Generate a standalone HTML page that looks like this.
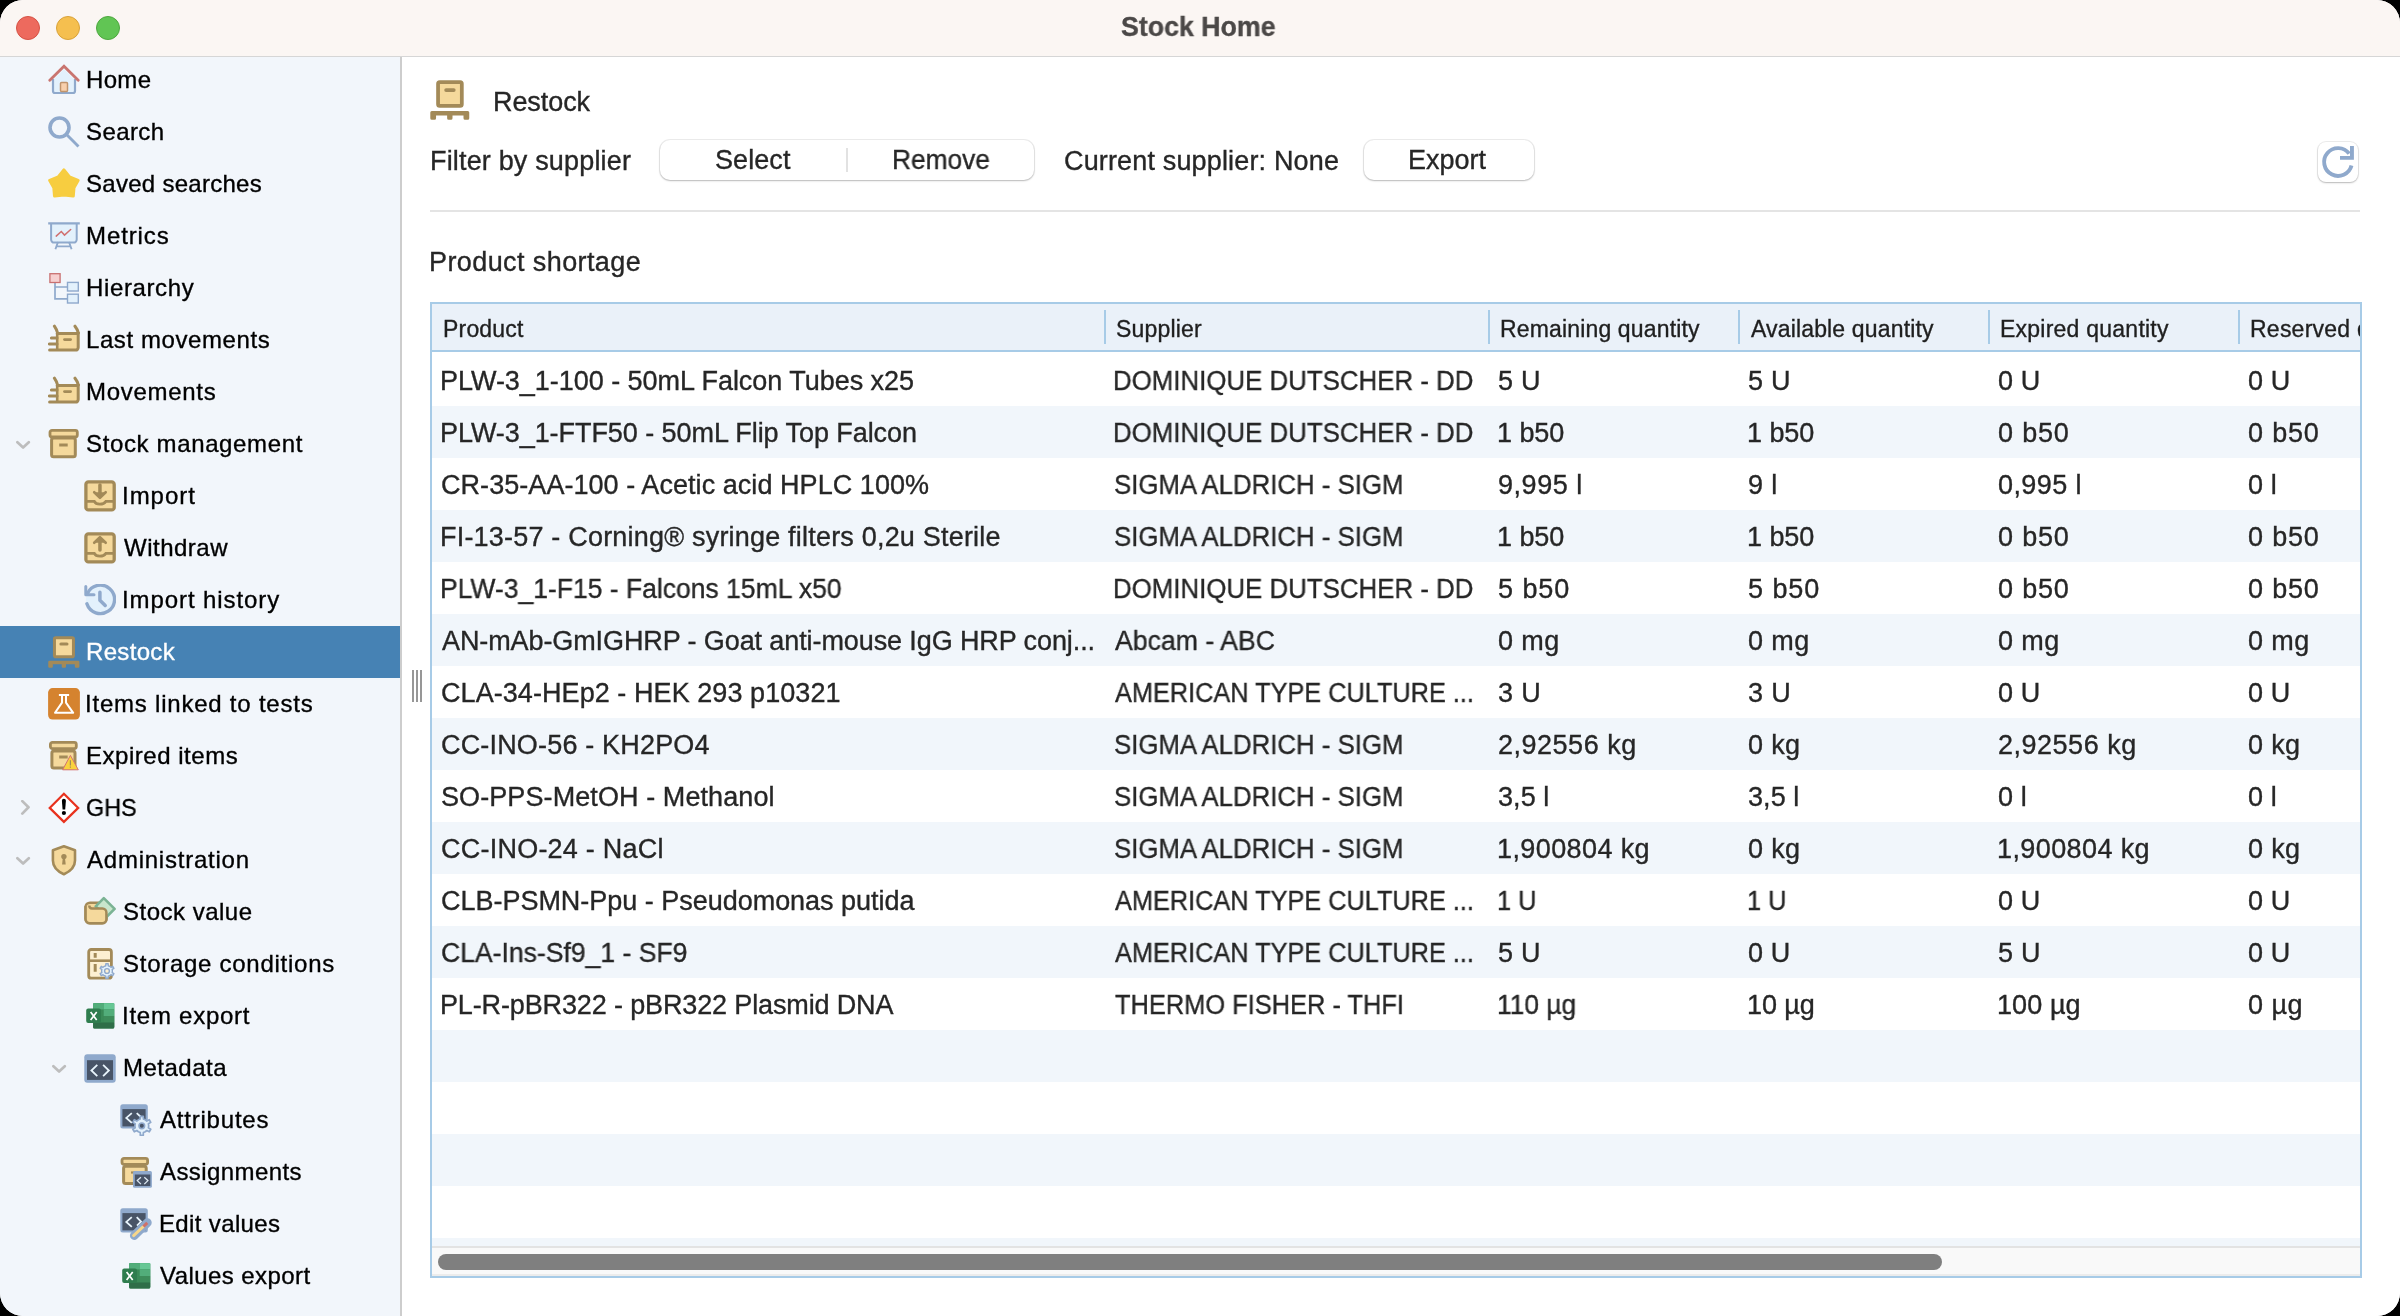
<!DOCTYPE html>
<html><head><meta charset="utf-8">
<style>
*{margin:0;padding:0;box-sizing:border-box}
html,body{width:2400px;height:1316px;overflow:hidden;background:#000}
body{font-family:"Liberation Sans",sans-serif;position:relative;-webkit-font-smoothing:antialiased}
#win{position:absolute;left:0;top:0;width:2400px;height:1316px;border-radius:23px;overflow:hidden;background:#fff}
#title{position:absolute;left:0;top:0;width:2400px;height:57px;background:#fbf6f3;border-bottom:1px solid #d6d6d6}
#title .t{position:absolute;left:0;width:2400px;top:11px;text-align:center;font-weight:bold;font-size:26px;color:#4b4847;line-height:30px}
.tl{position:absolute;top:16px;width:24px;height:24px;border-radius:50%}
#side{position:absolute;left:0;top:57px;width:402px;height:1259px;background:#f2f6fb;border-right:2px solid #cdcdcd}
.it{position:absolute;left:0;width:400px;height:52px}
.it .tx{position:absolute;top:0;line-height:52px;font-size:25px;color:#000;white-space:nowrap}
.it svg{position:absolute}
.sel{background:#4682b4}
.sel .tx{color:#fff}
.chev{position:absolute}
#main{position:absolute;left:402px;top:57px;width:1998px;height:1259px;background:#fff}
.abs{position:absolute;white-space:nowrap}
.tt{position:absolute;white-space:nowrap;line-height:40px;height:40px;will-change:transform}
.txt{color:#262626;font-size:26px;line-height:30px}
.btn{position:absolute;background:#fff;border-radius:10px;box-shadow:0 0 0 1px rgba(0,0,0,0.07),0 1px 2px rgba(0,0,0,0.22)}
#tbl{position:absolute;left:430px;top:302px;width:1932px;height:976px;border:2px solid #a7cbe7;overflow:hidden;background:#fff}
#thead{position:absolute;left:0;top:0;width:1928px;height:48px;background:#eaf1f9;border-bottom:2px solid #a7cbe7}
.hd{position:absolute;top:0;line-height:48px;font-size:23px;color:#1e1e1e;white-space:nowrap}
.sep{position:absolute;top:6px;width:2px;height:34px;background:#a7cbe7}
.row{position:absolute;left:0;width:1928px;height:52px}
.row.b{background:#f1f6fb}
.c{position:absolute;top:0;line-height:52px;font-size:26px;color:#262626;white-space:nowrap}
</style></head><body>
<div id="win">
 <div id="title">
  <div class="tl" style="left:16px;background:#ed6a5e;border:1px solid #d55245"></div>
  <div class="tl" style="left:56px;background:#f5bf4f;border:1px solid #d8a23a"></div>
  <div class="tl" style="left:96px;background:#61c554;border:1px solid #4ea73f"></div>
  <div class="tt" style="left:1121.25px;top:7px;font-size:27px;transform:scaleX(0.9905);transform-origin:0 0;color:#4b4847;-webkit-text-stroke:0.35px #4b4847;font-weight:bold">Stock Home</div>
 </div>
 <div id="side">
 <div class="it" style="top:-3px"><svg style="left:48px;top:10px" width="32" height="32" viewBox="0 0 32 32"><path d="M5.5 15.5 L16 5 L26.5 15.5 V28 H5.5Z" fill="#e3f1fc"/><path d="M5 15 V27 a2 2 0 0 0 2 2 H25 a2 2 0 0 0 2 -2 V15" fill="none" stroke="#8fa9cc" stroke-width="2.2"/><path d="M1.8 16.3 L16 2.3 L30.2 16.3" fill="none" stroke="#c97570" stroke-width="2.8" stroke-linecap="round" stroke-linejoin="miter"/><rect x="12.5" y="18.6" width="7" height="9" rx="1" fill="#f8d0ac" stroke="#c0946c" stroke-width="1.5"/></svg><div class="tt" style="left:86.30px;top:6px;font-size:24px;letter-spacing:0.343px;color:#000;-webkit-text-stroke:0.35px #000">Home</div></div>
<div class="it" style="top:49px"><svg style="left:48px;top:10px" width="32" height="32" viewBox="0 0 32 32"><circle cx="11.5" cy="11.5" r="9.5" fill="none" stroke="#8fa9cc" stroke-width="3.6"/><path d="M18.3 18.3 L30.5 30.5" stroke="#8fa9cc" stroke-width="2.9"/></svg><div class="tt" style="left:86.30px;top:6px;font-size:24px;letter-spacing:0.401px;color:#000;-webkit-text-stroke:0.35px #000">Search</div></div>
<div class="it" style="top:101px"><svg style="left:48px;top:10px" width="32" height="32" viewBox="0 0 32 32"><path d="M15.9 2 L21.5 8.9 L30 12.4 L25.9 19.6 L25.2 28 L15.9 26.8 L6.6 28 L5.9 19.6 L1.8 12.4 L10.3 8.9Z" fill="#f7cd40" stroke="#f7cd40" stroke-width="3.2" stroke-linejoin="round"/></svg><div class="tt" style="left:86.30px;top:6px;font-size:24px;letter-spacing:0.277px;color:#000;-webkit-text-stroke:0.35px #000">Saved searches</div></div>
<div class="it" style="top:153px"><svg style="left:48px;top:10px" width="32" height="32" viewBox="0 0 32 32"><path d="M3.1 3.2 V19.6 a3 3 0 0 0 3 3 H25.7 a3 3 0 0 0 3 -3 V3.2" fill="#e3f1fc" stroke="#8fa9cc" stroke-width="2"/><path d="M0.2 3.3 H31.8" stroke="#8fa9cc" stroke-width="2.3"/><path d="M8.2 16.1 L13.3 11.5 L16.5 15.1 L22.7 9.5" fill="none" stroke="#d07070" stroke-width="1.5" stroke-linecap="round"/><path d="M10 22 L7.4 29.2 M21 22 L23.6 29.2 M8.6 26.4 H22.4" stroke="#8fa9cc" stroke-width="1.9" fill="none"/></svg><div class="tt" style="left:86.30px;top:6px;font-size:24px;letter-spacing:0.895px;color:#000;-webkit-text-stroke:0.35px #000">Metrics</div></div>
<div class="it" style="top:205px"><svg style="left:48px;top:10px" width="32" height="32" viewBox="0 0 32 32"><path d="M7 10.5 V26.9 H19 M7 15 H19" fill="none" stroke="#8fa9cc" stroke-width="1.7"/><rect x="1.9" y="1.7" width="10.2" height="8.8" fill="#f6d0d0" stroke="#c97070" stroke-width="1.3"/><rect x="19.5" y="10.4" width="10.8" height="8.6" fill="#e3f1fc" stroke="#8fa9cc" stroke-width="1.4"/><rect x="19.5" y="22.2" width="10.8" height="8.8" fill="#e3f1fc" stroke="#8fa9cc" stroke-width="1.4"/></svg><div class="tt" style="left:86.30px;top:6px;font-size:24px;letter-spacing:0.626px;color:#000;-webkit-text-stroke:0.35px #000">Hierarchy</div></div>
<div class="it" style="top:257px"><svg style="left:48px;top:10px" width="32" height="32" viewBox="0 0 32 32"><rect x="9.2" y="9.4" width="20.9" height="16.6" fill="#f5d99c"/><path d="M9.2 9.4 H30.2 V23.6 a2.5 2.5 0 0 1 -2.5 2.5 H1.6" fill="none" stroke="#a38a58" stroke-width="3" stroke-linecap="round"/><path d="M9.2 9.4 V26" stroke="#a38a58" stroke-width="2.6"/><path d="M6.4 2.2 C8 4.5 9 6.5 9.6 9 M27 2.2 C28.6 4.2 29.8 6.3 30.4 9" fill="none" stroke="#a38a58" stroke-width="3" stroke-linecap="round"/><path d="M3.4 14 H9 M1.4 20 H9" stroke="#a38a58" stroke-width="3" stroke-linecap="round"/><path d="M16.5 15.6 H22.6" stroke="#a38a58" stroke-width="2.8" stroke-linecap="round"/></svg><div class="tt" style="left:86.30px;top:6px;font-size:24px;letter-spacing:0.587px;color:#000;-webkit-text-stroke:0.35px #000">Last movements</div></div>
<div class="it" style="top:309px"><svg style="left:48px;top:10px" width="32" height="32" viewBox="0 0 32 32"><rect x="9.2" y="9.4" width="20.9" height="16.6" fill="#f5d99c"/><path d="M9.2 9.4 H30.2 V23.6 a2.5 2.5 0 0 1 -2.5 2.5 H1.6" fill="none" stroke="#a38a58" stroke-width="3" stroke-linecap="round"/><path d="M9.2 9.4 V26" stroke="#a38a58" stroke-width="2.6"/><path d="M6.4 2.2 C8 4.5 9 6.5 9.6 9 M27 2.2 C28.6 4.2 29.8 6.3 30.4 9" fill="none" stroke="#a38a58" stroke-width="3" stroke-linecap="round"/><path d="M3.4 14 H9 M1.4 20 H9" stroke="#a38a58" stroke-width="3" stroke-linecap="round"/><path d="M16.5 15.6 H22.6" stroke="#a38a58" stroke-width="2.8" stroke-linecap="round"/></svg><div class="tt" style="left:86.30px;top:6px;font-size:24px;letter-spacing:0.707px;color:#000;-webkit-text-stroke:0.35px #000">Movements</div></div>
<div class="it" style="top:361px"><svg style="left:16px;top:19px" width="16" height="14" viewBox="0 0 16 14"><path d="M1.4 5.2 L7.1 10.5 L12.8 5.2" fill="none" stroke="#bdbdbd" stroke-width="2.7" stroke-linecap="round" stroke-linejoin="round"/></svg><svg style="left:48px;top:10px" width="32" height="32" viewBox="0 0 32 32"><rect x="3.6" y="10" width="23.7" height="18.8" rx="2" fill="#f5d99c" stroke="#a38a58" stroke-width="3"/><rect x="2" y="2.3" width="27.3" height="6.6" rx="2" fill="#f5d99c" stroke="#a38a58" stroke-width="2.8"/><path d="M11.2 17 H19.7" stroke="#a38a58" stroke-width="3"/></svg><div class="tt" style="left:86.30px;top:6px;font-size:24px;letter-spacing:0.639px;color:#000;-webkit-text-stroke:0.35px #000">Stock management</div></div>
<div class="it" style="top:413px"><svg style="left:84px;top:10px" width="32" height="32" viewBox="0 0 32 32"><rect x="1.9" y="1.9" width="28.3" height="28" rx="2.5" fill="#f5d99c" stroke="#a38a58" stroke-width="3.3"/><path d="M2 21.4 H10.3 C12 25 19.5 25 21.8 21.4 H30" fill="none" stroke="#a38a58" stroke-width="2.8"/><path d="M15.95 5 V14" stroke="#a38a58" stroke-width="3.5" stroke-linecap="round"/><path d="M10.2 12.2 L15.95 17.8 L21.7 12.2" fill="#a38a58" stroke="#a38a58" stroke-width="2.6" stroke-linejoin="round" stroke-linecap="round"/></svg><div class="tt" style="left:121.80px;top:6px;font-size:24px;letter-spacing:0.970px;color:#000;-webkit-text-stroke:0.35px #000">Import</div></div>
<div class="it" style="top:465px"><svg style="left:84px;top:10px" width="32" height="32" viewBox="0 0 32 32"><rect x="1.9" y="1.9" width="28.3" height="28" rx="2.5" fill="#f5d99c" stroke="#a38a58" stroke-width="3.3"/><path d="M2 21.4 H10.3 C12 25 19.5 25 21.8 21.4 H30" fill="none" stroke="#a38a58" stroke-width="2.8"/><path d="M15.95 18 V9" stroke="#a38a58" stroke-width="3.5" stroke-linecap="round"/><path d="M10.2 10.8 L15.95 5.2 L21.7 10.8" fill="#a38a58" stroke="#a38a58" stroke-width="2.6" stroke-linejoin="round" stroke-linecap="round"/></svg><div class="tt" style="left:123.80px;top:6px;font-size:24px;letter-spacing:0.502px;color:#000;-webkit-text-stroke:0.35px #000">Withdraw</div></div>
<div class="it" style="top:517px"><svg style="left:84px;top:10px" width="32" height="32" viewBox="0 0 32 32"><circle cx="16" cy="16" r="14.2" fill="#e3f1fc"/><path d="M2.9 19.8 A14.2 14.2 0 1 0 3.6 9.2" fill="none" stroke="#8fa9cc" stroke-width="3.4" stroke-linecap="round"/><path d="M1.8 2.5 V10.7 H10" fill="none" stroke="#8fa9cc" stroke-width="3" stroke-linecap="round" stroke-linejoin="round"/><path d="M15.9 8.2 V16.3 L21.2 21.5" fill="none" stroke="#8fa9cc" stroke-width="3.5" stroke-linecap="round" stroke-linejoin="round"/></svg><div class="tt" style="left:121.80px;top:6px;font-size:24px;letter-spacing:0.910px;color:#000;-webkit-text-stroke:0.35px #000">Import history</div></div>
<div class="it sel" style="top:569px"><svg style="left:48px;top:10px" width="32" height="32" viewBox="0 0 32 32"><rect x="6.45" y="1.75" width="19" height="19" rx="1.3" fill="#f5d99c" stroke="#a38a58" stroke-width="3"/><path d="M12.9 8 H19" stroke="#a38a58" stroke-width="3" stroke-linecap="round"/><path d="M0.24 26 a1.2 1.2 0 0 1 1.2 -1.2 H30.2 a1.2 1.2 0 0 1 1.2 1.2 V30.6 a1.2 1.2 0 0 1 -1.2 1.2 H28 a1.2 1.2 0 0 1 -1.2 -1.2 V28.3 H18 V30.6 a1.2 1.2 0 0 1 -1.2 1.2 H14.9 a1.2 1.2 0 0 1 -1.2 -1.2 V28.3 H4.84 V30.6 a1.2 1.2 0 0 1 -1.2 1.2 H1.44 a1.2 1.2 0 0 1 -1.2 -1.2Z" fill="#a38a58"/></svg><div class="tt" style="left:86.30px;top:6px;font-size:24px;letter-spacing:0.334px;color:#fff;-webkit-text-stroke:0.35px #fff">Restock</div></div>
<div class="it" style="top:621px"><svg style="left:48px;top:10px" width="32" height="32" viewBox="0 0 32 32"><rect x="0.1" y="0.1" width="31.8" height="31.5" rx="4.5" fill="#d5832f"/><path d="M10.9 7 H21.1 M14 7 V14.6 L7 24.8 H25.2 L18 14.6 V7" fill="none" stroke="#fff" stroke-width="2" stroke-linejoin="round"/></svg><div class="tt" style="left:85.30px;top:6px;font-size:24px;letter-spacing:0.781px;color:#000;-webkit-text-stroke:0.35px #000">Items linked to tests</div></div>
<div class="it" style="top:673px"><svg style="left:48px;top:10px" width="32" height="32" viewBox="0 0 32 32"><rect x="3.9" y="10.9" width="23.1" height="17.1" rx="2" fill="#f5d99c" stroke="#a38a58" stroke-width="3"/><rect x="2.4" y="2.4" width="25.9" height="6.2" rx="2" fill="#f5d99c" stroke="#a38a58" stroke-width="2.8"/><path d="M11.2 17 H19.7" stroke="#a38a58" stroke-width="3"/><path d="M22.4 15.4 L30.3 29.8 H14.6Z" fill="#f9d23e" stroke="#d27272" stroke-width="1" stroke-linejoin="round"/><path d="M22.4 20.3 V25.4 M22.4 26.6 V27.8" stroke="#a38a58" stroke-width="1.2"/></svg><div class="tt" style="left:86.30px;top:6px;font-size:24px;letter-spacing:0.526px;color:#000;-webkit-text-stroke:0.35px #000">Expired items</div></div>
<div class="it" style="top:725px"><svg style="left:20px;top:18px" width="12" height="16" viewBox="0 0 12 16"><path d="M2.3 1.1 L8.5 7.3 L2.3 13.6" fill="none" stroke="#bdbdbd" stroke-width="2.7" stroke-linecap="round" stroke-linejoin="round"/></svg><svg style="left:48px;top:10px" width="32" height="32" viewBox="0 0 32 32"><path d="M15.9 1.8 L30.2 15.9 L15.9 29.9 L1.7 15.9Z" fill="#fff" stroke="#e8321e" stroke-width="2.2" stroke-linejoin="miter"/><path d="M13.9 8.8 a2 2 0 0 1 4 0 L17.2 17.6 H14.6Z" fill="#000"/><circle cx="15.9" cy="21" r="2.1" fill="#000"/></svg><div class="tt" style="left:86.33px;top:6px;font-size:24px;transform:scaleX(0.9740);transform-origin:0 0;color:#000;-webkit-text-stroke:0.35px #000">GHS</div></div>
<div class="it" style="top:777px"><svg style="left:16px;top:19px" width="16" height="14" viewBox="0 0 16 14"><path d="M1.4 5.2 L7.1 10.5 L12.8 5.2" fill="none" stroke="#bdbdbd" stroke-width="2.7" stroke-linecap="round" stroke-linejoin="round"/></svg><svg style="left:48px;top:10px" width="32" height="32" viewBox="0 0 32 32"><path d="M15.9 2.3 L27 6.2 V16.5 C27 23 22 27.5 15.9 30.2 C9.8 27.5 4.9 23 4.9 16.5 V6.2Z" fill="#f5d99c" stroke="#a38a58" stroke-width="2.6" stroke-linejoin="round"/><circle cx="15.9" cy="12.6" r="2.7" fill="#a38a58"/><path d="M14.9 13 H16.9 L17.7 20.4 H14.1Z" fill="#a38a58"/></svg><div class="tt" style="left:87.30px;top:6px;font-size:24px;letter-spacing:0.768px;color:#000;-webkit-text-stroke:0.35px #000">Administration</div></div>
<div class="it" style="top:829px"><svg style="left:84px;top:10px" width="32" height="32" viewBox="0 0 32 32"><rect x="1.55" y="6.7" width="20.9" height="20.5" rx="4.5" fill="#f5d99c" stroke="#a38a58" stroke-width="2.6"/><path d="M19.8 2.2 L30.6 12.9 L22.5 21 L11.7 10.3Z" fill="#c8e6cc" stroke="#7bb394" stroke-width="2.6" stroke-linejoin="round"/><path d="M5.3 9.6 C5.3 11.6 6.3 12.5 8 12.5 H18.4 a4 4 0 0 1 4 4 V23.2 a4 4 0 0 1 -4 4 H5.6 a4 4 0 0 1 -4 -4 V10" fill="#f5d99c" stroke="#a38a58" stroke-width="2.5"/></svg><div class="tt" style="left:122.80px;top:6px;font-size:24px;letter-spacing:0.498px;color:#000;-webkit-text-stroke:0.35px #000">Stock value</div></div>
<div class="it" style="top:881px"><svg style="left:84px;top:10px" width="32" height="32" viewBox="0 0 32 32"><rect x="4.7" y="1.5" width="22.7" height="28.7" rx="2.5" fill="#fdf0d2" stroke="#a38a58" stroke-width="2.8"/><path d="M4.7 12.7 H27.4" stroke="#a38a58" stroke-width="2.6"/><path d="M11.2 5.1 V9.7 M11.2 16 V23.7" stroke="#a38a58" stroke-width="3"/><path d="M20.30 18.32 L21.77 17.74 L21.84 15.69 L24.16 15.69 L24.23 17.74 L25.70 18.32 L26.94 19.30 L28.75 18.34 L29.91 20.35 L28.17 21.44 L28.40 23.00 L28.17 24.56 L29.91 25.65 L28.75 27.66 L26.94 26.70 L25.70 27.68 L24.23 28.26 L24.16 30.31 L21.84 30.31 L21.77 28.26 L20.30 27.68 L19.06 26.70 L17.25 27.66 L16.09 25.65 L17.83 24.56 L17.60 23.00 L17.83 21.44 L16.09 20.35 L17.25 18.34 L19.06 19.30Z" fill="#e3f1fc" stroke="#8fa9cc" stroke-width="1.4" stroke-linejoin="round"/><circle cx="23" cy="23" r="2.4" fill="#fdf0d2" stroke="#8fa9cc" stroke-width="1.4"/></svg><div class="tt" style="left:122.80px;top:6px;font-size:24px;letter-spacing:0.730px;color:#000;-webkit-text-stroke:0.35px #000">Storage conditions</div></div>
<div class="it" style="top:933px"><svg style="left:84px;top:10px" width="32" height="32" viewBox="0 0 32 32"><rect x="9.1" y="3.1" width="21.2" height="25.4" rx="1.5" fill="#3a8a57"/><rect x="9.1" y="3.1" width="10.6" height="6.3" fill="#52ad7a"/><rect x="19.7" y="3.1" width="10.6" height="6.3" fill="#67c795"/><rect x="19.7" y="9.4" width="10.6" height="6.6" fill="#52ad7a"/><rect x="19.7" y="16" width="10.6" height="6.4" fill="#3d8c5a"/><path d="M9.1 22.4 H30.3 V27 a1.5 1.5 0 0 1 -1.5 1.5 H10.6 a1.5 1.5 0 0 1 -1.5 -1.5Z" fill="#2f6e48"/><rect x="2.2" y="8.5" width="14.8" height="14.5" rx="2" fill="#2f7d4e"/><path d="M6.6 12.1 L12.7 20 M12.7 12.1 L6.6 20" stroke="#fff" stroke-width="1.7"/></svg><div class="tt" style="left:121.80px;top:6px;font-size:24px;letter-spacing:0.742px;color:#000;-webkit-text-stroke:0.35px #000">Item export</div></div>
<div class="it" style="top:985px"><svg style="left:52px;top:19px" width="16" height="14" viewBox="0 0 16 14"><path d="M1.4 5.2 L7.1 10.5 L12.8 5.2" fill="none" stroke="#bdbdbd" stroke-width="2.7" stroke-linecap="round" stroke-linejoin="round"/></svg><svg style="left:84px;top:10px" width="32" height="32" viewBox="0 0 32 32"><rect x="0.3" y="2.2" width="31.4" height="28.5" rx="3" fill="#8fa9cc"/><rect x="3" y="8.2" width="26" height="19.7" fill="#485467"/><path d="M13.3 12.9 L7.4 18.5 L13.3 24.2 M19.1 12.9 L24.9 18.5 L19.1 24.2" fill="none" stroke="#e8f4fc" stroke-width="1.8"/></svg><div class="tt" style="left:122.80px;top:6px;font-size:24px;letter-spacing:0.497px;color:#000;-webkit-text-stroke:0.35px #000">Metadata</div></div>
<div class="it" style="top:1037px"><svg style="left:120px;top:10px" width="32" height="32" viewBox="0 0 32 32"><rect x="0.3" y="0.2" width="27.5" height="24.4" rx="2.5" fill="#8fa9cc"/><rect x="2.4" y="5.1" width="23.2" height="17.3" fill="#485467"/><path d="M11.8 9.1 L6.3 13.9 L11.8 18.8 M16.7 9.1 L22 14" fill="none" stroke="#e8f4fc" stroke-width="1.8"/><path d="M18.35 15.82 L20.22 15.08 L20.30 12.32 L23.30 12.32 L23.38 15.08 L25.25 15.82 L26.83 17.08 L29.26 15.76 L30.76 18.36 L28.41 19.81 L28.70 21.80 L28.41 23.79 L30.76 25.24 L29.26 27.84 L26.83 26.52 L25.25 27.78 L23.38 28.52 L23.30 31.28 L20.30 31.28 L20.22 28.52 L18.35 27.78 L16.77 26.52 L14.34 27.84 L12.84 25.24 L15.19 23.79 L14.90 21.80 L15.19 19.81 L12.84 18.36 L14.34 15.76 L16.77 17.08Z" fill="#e3f1fc" stroke="#8fa9cc" stroke-width="1.7" stroke-linejoin="round"/><circle cx="21.8" cy="21.8" r="2.8" fill="#485467" stroke="#8fa9cc" stroke-width="1.6"/></svg><div class="tt" style="left:159.50px;top:6px;font-size:24px;letter-spacing:0.791px;color:#000;-webkit-text-stroke:0.35px #000">Attributes</div></div>
<div class="it" style="top:1089px"><svg style="left:120px;top:10px" width="32" height="32" viewBox="0 0 32 32"><rect x="3.6" y="10.3" width="22.6" height="17.3" rx="2" fill="#f5d99c" stroke="#a38a58" stroke-width="3"/><rect x="2" y="2.4" width="25.6" height="5.9" rx="2" fill="#f5d99c" stroke="#a38a58" stroke-width="2.8"/><path d="M11 16.5 H17" stroke="#a38a58" stroke-width="2.2"/><rect x="13" y="15.1" width="18.9" height="16.6" rx="1.5" fill="#8fa9cc"/><rect x="14.8" y="18.5" width="15.5" height="11.5" fill="#485467"/><path d="M20.9 21.2 L17.3 24.6 L20.9 28.1 M24.3 21.2 L27.9 24.6 L24.3 28.1" fill="none" stroke="#e0ecf6" stroke-width="1.3"/></svg><div class="tt" style="left:159.50px;top:6px;font-size:24px;letter-spacing:0.411px;color:#000;-webkit-text-stroke:0.35px #000">Assignments</div></div>
<div class="it" style="top:1141px"><svg style="left:120px;top:10px" width="32" height="32" viewBox="0 0 32 32"><rect x="0.3" y="0.2" width="27.5" height="24.4" rx="2.5" fill="#8fa9cc"/><rect x="2.4" y="5.1" width="23.2" height="17.3" fill="#485467"/><path d="M11.8 9.1 L6.3 13.9 L11.8 18.8 M16.7 9.1 L21 13.6 L17 17.6" fill="none" stroke="#e8f4fc" stroke-width="1.8"/><path d="M14.2 27.6 L27.4 14.6" stroke="#8fa9cc" stroke-width="8.6" stroke-linecap="round"/><path d="M13.6 27.6 L23.4 18.5" stroke="#f7d68a" stroke-width="3" stroke-linecap="round"/><path d="M23.4 18.5 L27.3 14.8" stroke="#d07068" stroke-width="3"/></svg><div class="tt" style="left:158.50px;top:6px;font-size:24px;letter-spacing:0.360px;color:#000;-webkit-text-stroke:0.35px #000">Edit values</div></div>
<div class="it" style="top:1193px"><svg style="left:120px;top:10px" width="32" height="32" viewBox="0 0 32 32"><rect x="9.1" y="3.1" width="21.2" height="25.4" rx="1.5" fill="#3a8a57"/><rect x="9.1" y="3.1" width="10.6" height="6.3" fill="#52ad7a"/><rect x="19.7" y="3.1" width="10.6" height="6.3" fill="#67c795"/><rect x="19.7" y="9.4" width="10.6" height="6.6" fill="#52ad7a"/><rect x="19.7" y="16" width="10.6" height="6.4" fill="#3d8c5a"/><path d="M9.1 22.4 H30.3 V27 a1.5 1.5 0 0 1 -1.5 1.5 H10.6 a1.5 1.5 0 0 1 -1.5 -1.5Z" fill="#2f6e48"/><rect x="2.2" y="8.5" width="14.8" height="14.5" rx="2" fill="#2f7d4e"/><path d="M6.6 12.1 L12.7 20 M12.7 12.1 L6.6 20" stroke="#fff" stroke-width="1.7"/></svg><div class="tt" style="left:159.50px;top:6px;font-size:24px;letter-spacing:0.433px;color:#000;-webkit-text-stroke:0.35px #000">Values export</div></div>
 </div>
 <div id="main"></div>
 <svg style="position:absolute;left:430px;top:80px" width="40" height="40" viewBox="0 0 32 32"><rect x="6.45" y="1.75" width="19" height="19" rx="1.3" fill="#f5d99c" stroke="#a38a58" stroke-width="3"/><path d="M12.9 8 H19" stroke="#a38a58" stroke-width="3" stroke-linecap="round"/><path d="M0.24 26 a1.2 1.2 0 0 1 1.2 -1.2 H30.2 a1.2 1.2 0 0 1 1.2 1.2 V30.6 a1.2 1.2 0 0 1 -1.2 1.2 H28 a1.2 1.2 0 0 1 -1.2 -1.2 V28.3 H18 V30.6 a1.2 1.2 0 0 1 -1.2 1.2 H14.9 a1.2 1.2 0 0 1 -1.2 -1.2 V28.3 H4.84 V30.6 a1.2 1.2 0 0 1 -1.2 1.2 H1.44 a1.2 1.2 0 0 1 -1.2 -1.2Z" fill="#a38a58"/></svg>
<div class="tt" style="left:492.90px;top:82px;font-size:27px;letter-spacing:-0.072px;color:#262626;-webkit-text-stroke:0.35px #262626">Restock</div>
<div class="tt" style="left:430.10px;top:141px;font-size:27px;letter-spacing:0.166px;color:#262626;-webkit-text-stroke:0.35px #262626">Filter by supplier</div>
<div class="btn" style="left:660px;top:140px;width:374px;height:40px"></div>
<div class="abs" style="left:846px;top:148px;width:2px;height:24px;background:#e2e2e2"></div>
<div class="tt" style="left:714.80px;top:140px;font-size:27px;letter-spacing:0.072px;color:#262626;-webkit-text-stroke:0.35px #262626">Select</div>
<div class="tt" style="left:892.05px;top:140px;font-size:27px;transform:scaleX(0.9741);transform-origin:0 0;color:#262626;-webkit-text-stroke:0.35px #262626">Remove</div>
<div class="tt" style="left:1064.00px;top:141px;font-size:27px;letter-spacing:0.156px;color:#262626;-webkit-text-stroke:0.35px #262626">Current supplier: None</div>
<div class="btn" style="left:1364px;top:140px;width:170px;height:40px"></div>
<div class="tt" style="left:1408.40px;top:140px;font-size:27px;letter-spacing:0.014px;color:#262626;-webkit-text-stroke:0.35px #262626">Export</div>
<div class="btn" style="left:2318px;top:142px;width:40px;height:40px;border-radius:8px"></div>
<svg style="position:absolute;left:2318px;top:142px" width="40" height="40" viewBox="0 0 40 40"><path d="M33.5 23.5 A13.9 13.9 0 1 1 31.2 11.7" fill="none" stroke="#8fa9cc" stroke-width="3.9"/><path d="M22 14 H32 V4 H35.9 V17.7 H22Z" fill="#8fa9cc"/></svg>
<div class="abs" style="left:430px;top:210px;width:1930px;height:2px;background:#e4e4e4"></div>
<div class="tt" style="left:428.90px;top:242px;font-size:27px;letter-spacing:0.406px;color:#262626;-webkit-text-stroke:0.35px #262626">Product shortage</div>
<div class="abs" style="left:412px;top:670px;width:2px;height:32px;background:#979797"></div>
<div class="abs" style="left:416px;top:670px;width:2px;height:32px;background:#979797"></div>
<div class="abs" style="left:420px;top:670px;width:2px;height:32px;background:#979797"></div>
<div id="tbl"><div id="thead">
<div class="tt" style="left:10.90px;top:5px;font-size:23px;letter-spacing:0.188px;color:#1f1f1f;-webkit-text-stroke:0.35px #1f1f1f">Product</div>
<div class="tt" style="left:684.00px;top:5px;font-size:23px;letter-spacing:0.182px;color:#1f1f1f;-webkit-text-stroke:0.35px #1f1f1f">Supplier</div>
<div class="tt" style="left:1068.00px;top:5px;font-size:23px;letter-spacing:0.153px;color:#1f1f1f;-webkit-text-stroke:0.35px #1f1f1f">Remaining quantity</div>
<div class="tt" style="left:1319.00px;top:5px;font-size:23px;letter-spacing:0.155px;color:#1f1f1f;-webkit-text-stroke:0.35px #1f1f1f">Available quantity</div>
<div class="tt" style="left:1568.00px;top:5px;font-size:23px;letter-spacing:0.238px;color:#1f1f1f;-webkit-text-stroke:0.35px #1f1f1f">Expired quantity</div>
<div class="tt" style="left:1818.00px;top:5px;font-size:23px;letter-spacing:0.239px;color:#1f1f1f;-webkit-text-stroke:0.35px #1f1f1f">Reserved quantity</div>
<div class="sep" style="left:672px"></div>
<div class="sep" style="left:1056px"></div>
<div class="sep" style="left:1306px"></div>
<div class="sep" style="left:1556px"></div>
<div class="sep" style="left:1806px"></div>
</div>
<div class="row" style="top:50px"><div class="tt" style="left:7.50px;top:7px;font-size:27px;letter-spacing:-0.036px;color:#262626;-webkit-text-stroke:0.35px #262626">PLW-3_1-100 - 50mL Falcon Tubes x25</div><div class="tt" style="left:681.09px;top:7px;font-size:27px;transform:scaleX(0.9572);transform-origin:0 0;color:#262626;-webkit-text-stroke:0.35px #262626">DOMINIQUE DUTSCHER - DD</div><div class="tt" style="left:1065.70px;top:7px;font-size:27px;letter-spacing:0.241px;color:#262626;-webkit-text-stroke:0.35px #262626">5 U</div><div class="tt" style="left:1315.70px;top:7px;font-size:27px;letter-spacing:0.241px;color:#262626;-webkit-text-stroke:0.35px #262626">5 U</div><div class="tt" style="left:1565.90px;top:7px;font-size:27px;letter-spacing:0.091px;color:#262626;-webkit-text-stroke:0.35px #262626">0 U</div><div class="tt" style="left:1816.00px;top:7px;font-size:27px;letter-spacing:0.091px;color:#262626;-webkit-text-stroke:0.35px #262626">0 U</div></div>
<div class="row b" style="top:102px"><div class="tt" style="left:7.50px;top:7px;font-size:27px;letter-spacing:-0.062px;color:#262626;-webkit-text-stroke:0.35px #262626">PLW-3_1-FTF50 - 50mL Flip Top Falcon</div><div class="tt" style="left:681.09px;top:7px;font-size:27px;transform:scaleX(0.9572);transform-origin:0 0;color:#262626;-webkit-text-stroke:0.35px #262626">DOMINIQUE DUTSCHER - DD</div><div class="tt" style="left:1064.70px;top:7px;font-size:27px;letter-spacing:-0.062px;color:#262626;-webkit-text-stroke:0.35px #262626">1 b50</div><div class="tt" style="left:1314.70px;top:7px;font-size:27px;letter-spacing:-0.062px;color:#262626;-webkit-text-stroke:0.35px #262626">1 b50</div><div class="tt" style="left:1565.90px;top:7px;font-size:27px;letter-spacing:0.813px;color:#262626;-webkit-text-stroke:0.35px #262626">0 b50</div><div class="tt" style="left:1816.00px;top:7px;font-size:27px;letter-spacing:0.813px;color:#262626;-webkit-text-stroke:0.35px #262626">0 b50</div></div>
<div class="row" style="top:154px"><div class="tt" style="left:8.50px;top:7px;font-size:27px;letter-spacing:0.052px;color:#262626;-webkit-text-stroke:0.35px #262626">CR-35-AA-100 - Acetic acid HPLC 100%</div><div class="tt" style="left:682.04px;top:7px;font-size:27px;transform:scaleX(0.9554);transform-origin:0 0;color:#262626;-webkit-text-stroke:0.35px #262626">SIGMA ALDRICH - SIGM</div><div class="tt" style="left:1065.70px;top:7px;font-size:27px;letter-spacing:0.539px;color:#262626;-webkit-text-stroke:0.35px #262626">9,995 l</div><div class="tt" style="left:1315.70px;top:7px;font-size:27px;letter-spacing:0.391px;color:#262626;-webkit-text-stroke:0.35px #262626">9 l</div><div class="tt" style="left:1565.90px;top:7px;font-size:27px;letter-spacing:0.422px;color:#262626;-webkit-text-stroke:0.35px #262626">0,995 l</div><div class="tt" style="left:1816.00px;top:7px;font-size:27px;letter-spacing:0.091px;color:#262626;-webkit-text-stroke:0.35px #262626">0 l</div></div>
<div class="row b" style="top:206px"><div class="tt" style="left:7.50px;top:7px;font-size:27px;letter-spacing:0.200px;color:#262626;-webkit-text-stroke:0.35px #262626">FI-13-57 - Corning® syringe filters 0,2u Sterile</div><div class="tt" style="left:682.04px;top:7px;font-size:27px;transform:scaleX(0.9554);transform-origin:0 0;color:#262626;-webkit-text-stroke:0.35px #262626">SIGMA ALDRICH - SIGM</div><div class="tt" style="left:1064.70px;top:7px;font-size:27px;letter-spacing:-0.062px;color:#262626;-webkit-text-stroke:0.35px #262626">1 b50</div><div class="tt" style="left:1314.70px;top:7px;font-size:27px;letter-spacing:-0.062px;color:#262626;-webkit-text-stroke:0.35px #262626">1 b50</div><div class="tt" style="left:1565.90px;top:7px;font-size:27px;letter-spacing:0.813px;color:#262626;-webkit-text-stroke:0.35px #262626">0 b50</div><div class="tt" style="left:1816.00px;top:7px;font-size:27px;letter-spacing:0.813px;color:#262626;-webkit-text-stroke:0.35px #262626">0 b50</div></div>
<div class="row" style="top:258px"><div class="tt" style="left:7.54px;top:7px;font-size:27px;transform:scaleX(0.9812);transform-origin:0 0;color:#262626;-webkit-text-stroke:0.35px #262626">PLW-3_1-F15 - Falcons 15mL x50</div><div class="tt" style="left:681.09px;top:7px;font-size:27px;transform:scaleX(0.9572);transform-origin:0 0;color:#262626;-webkit-text-stroke:0.35px #262626">DOMINIQUE DUTSCHER - DD</div><div class="tt" style="left:1065.70px;top:7px;font-size:27px;letter-spacing:0.938px;color:#262626;-webkit-text-stroke:0.35px #262626">5 b50</div><div class="tt" style="left:1315.70px;top:7px;font-size:27px;letter-spacing:0.938px;color:#262626;-webkit-text-stroke:0.35px #262626">5 b50</div><div class="tt" style="left:1565.90px;top:7px;font-size:27px;letter-spacing:0.813px;color:#262626;-webkit-text-stroke:0.35px #262626">0 b50</div><div class="tt" style="left:1816.00px;top:7px;font-size:27px;letter-spacing:0.813px;color:#262626;-webkit-text-stroke:0.35px #262626">0 b50</div></div>
<div class="row b" style="top:310px"><div class="tt" style="left:9.50px;top:7px;font-size:27px;letter-spacing:-0.099px;color:#262626;-webkit-text-stroke:0.35px #262626">AN-mAb-GmIGHRP - Goat anti-mouse IgG HRP conj...</div><div class="tt" style="left:683.00px;top:7px;font-size:27px;transform:scaleX(0.9875);transform-origin:0 0;color:#262626;-webkit-text-stroke:0.35px #262626">Abcam - ABC</div><div class="tt" style="left:1065.70px;top:7px;font-size:27px;letter-spacing:0.397px;color:#262626;-webkit-text-stroke:0.35px #262626">0 mg</div><div class="tt" style="left:1315.70px;top:7px;font-size:27px;letter-spacing:0.397px;color:#262626;-webkit-text-stroke:0.35px #262626">0 mg</div><div class="tt" style="left:1565.90px;top:7px;font-size:27px;letter-spacing:0.397px;color:#262626;-webkit-text-stroke:0.35px #262626">0 mg</div><div class="tt" style="left:1816.00px;top:7px;font-size:27px;letter-spacing:0.397px;color:#262626;-webkit-text-stroke:0.35px #262626">0 mg</div></div>
<div class="row" style="top:362px"><div class="tt" style="left:8.50px;top:7px;font-size:27px;letter-spacing:0.066px;color:#262626;-webkit-text-stroke:0.35px #262626">CLA-34-HEp2 - HEK 293 p10321</div><div class="tt" style="left:683.00px;top:7px;font-size:27px;transform:scaleX(0.9371);transform-origin:0 0;color:#262626;-webkit-text-stroke:0.35px #262626">AMERICAN TYPE CULTURE ...</div><div class="tt" style="left:1065.70px;top:7px;font-size:27px;letter-spacing:0.391px;color:#262626;-webkit-text-stroke:0.35px #262626">3 U</div><div class="tt" style="left:1315.70px;top:7px;font-size:27px;letter-spacing:0.391px;color:#262626;-webkit-text-stroke:0.35px #262626">3 U</div><div class="tt" style="left:1565.90px;top:7px;font-size:27px;letter-spacing:0.091px;color:#262626;-webkit-text-stroke:0.35px #262626">0 U</div><div class="tt" style="left:1816.00px;top:7px;font-size:27px;letter-spacing:0.091px;color:#262626;-webkit-text-stroke:0.35px #262626">0 U</div></div>
<div class="row b" style="top:414px"><div class="tt" style="left:8.50px;top:7px;font-size:27px;letter-spacing:0.174px;color:#262626;-webkit-text-stroke:0.35px #262626">CC-INO-56 - KH2PO4</div><div class="tt" style="left:682.04px;top:7px;font-size:27px;transform:scaleX(0.9554);transform-origin:0 0;color:#262626;-webkit-text-stroke:0.35px #262626">SIGMA ALDRICH - SIGM</div><div class="tt" style="left:1065.70px;top:7px;font-size:27px;letter-spacing:0.511px;color:#262626;-webkit-text-stroke:0.35px #262626">2,92556 kg</div><div class="tt" style="left:1315.70px;top:7px;font-size:27px;letter-spacing:0.327px;color:#262626;-webkit-text-stroke:0.35px #262626">0 kg</div><div class="tt" style="left:1565.90px;top:7px;font-size:27px;letter-spacing:0.511px;color:#262626;-webkit-text-stroke:0.35px #262626">2,92556 kg</div><div class="tt" style="left:1816.00px;top:7px;font-size:27px;letter-spacing:0.327px;color:#262626;-webkit-text-stroke:0.35px #262626">0 kg</div></div>
<div class="row" style="top:466px"><div class="tt" style="left:8.50px;top:7px;font-size:27px;letter-spacing:0.087px;color:#262626;-webkit-text-stroke:0.35px #262626">SO-PPS-MetOH - Methanol</div><div class="tt" style="left:682.04px;top:7px;font-size:27px;transform:scaleX(0.9554);transform-origin:0 0;color:#262626;-webkit-text-stroke:0.35px #262626">SIGMA ALDRICH - SIGM</div><div class="tt" style="left:1065.70px;top:7px;font-size:27px;letter-spacing:0.066px;color:#262626;-webkit-text-stroke:0.35px #262626">3,5 l</div><div class="tt" style="left:1315.70px;top:7px;font-size:27px;letter-spacing:0.066px;color:#262626;-webkit-text-stroke:0.35px #262626">3,5 l</div><div class="tt" style="left:1565.90px;top:7px;font-size:27px;letter-spacing:0.091px;color:#262626;-webkit-text-stroke:0.35px #262626">0 l</div><div class="tt" style="left:1816.00px;top:7px;font-size:27px;letter-spacing:0.091px;color:#262626;-webkit-text-stroke:0.35px #262626">0 l</div></div>
<div class="row b" style="top:518px"><div class="tt" style="left:8.50px;top:7px;font-size:27px;letter-spacing:0.232px;color:#262626;-webkit-text-stroke:0.35px #262626">CC-INO-24 - NaCl</div><div class="tt" style="left:682.04px;top:7px;font-size:27px;transform:scaleX(0.9554);transform-origin:0 0;color:#262626;-webkit-text-stroke:0.35px #262626">SIGMA ALDRICH - SIGM</div><div class="tt" style="left:1064.70px;top:7px;font-size:27px;letter-spacing:0.398px;color:#262626;-webkit-text-stroke:0.35px #262626">1,900804 kg</div><div class="tt" style="left:1315.70px;top:7px;font-size:27px;letter-spacing:0.327px;color:#262626;-webkit-text-stroke:0.35px #262626">0 kg</div><div class="tt" style="left:1564.90px;top:7px;font-size:27px;letter-spacing:0.398px;color:#262626;-webkit-text-stroke:0.35px #262626">1,900804 kg</div><div class="tt" style="left:1816.00px;top:7px;font-size:27px;letter-spacing:0.327px;color:#262626;-webkit-text-stroke:0.35px #262626">0 kg</div></div>
<div class="row" style="top:570px"><div class="tt" style="left:8.50px;top:7px;font-size:27px;letter-spacing:-0.022px;color:#262626;-webkit-text-stroke:0.35px #262626">CLB-PSMN-Ppu - Pseudomonas putida</div><div class="tt" style="left:683.00px;top:7px;font-size:27px;transform:scaleX(0.9371);transform-origin:0 0;color:#262626;-webkit-text-stroke:0.35px #262626">AMERICAN TYPE CULTURE ...</div><div class="tt" style="left:1064.82px;top:7px;font-size:27px;transform:scaleX(0.9398);transform-origin:0 0;color:#262626;-webkit-text-stroke:0.35px #262626">1 U</div><div class="tt" style="left:1314.82px;top:7px;font-size:27px;transform:scaleX(0.9398);transform-origin:0 0;color:#262626;-webkit-text-stroke:0.35px #262626">1 U</div><div class="tt" style="left:1565.90px;top:7px;font-size:27px;letter-spacing:0.091px;color:#262626;-webkit-text-stroke:0.35px #262626">0 U</div><div class="tt" style="left:1816.00px;top:7px;font-size:27px;letter-spacing:0.091px;color:#262626;-webkit-text-stroke:0.35px #262626">0 U</div></div>
<div class="row b" style="top:622px"><div class="tt" style="left:8.52px;top:7px;font-size:27px;transform:scaleX(0.9836);transform-origin:0 0;color:#262626;-webkit-text-stroke:0.35px #262626">CLA-Ins-Sf9_1 - SF9</div><div class="tt" style="left:683.00px;top:7px;font-size:27px;transform:scaleX(0.9371);transform-origin:0 0;color:#262626;-webkit-text-stroke:0.35px #262626">AMERICAN TYPE CULTURE ...</div><div class="tt" style="left:1065.70px;top:7px;font-size:27px;letter-spacing:0.241px;color:#262626;-webkit-text-stroke:0.35px #262626">5 U</div><div class="tt" style="left:1315.70px;top:7px;font-size:27px;letter-spacing:0.091px;color:#262626;-webkit-text-stroke:0.35px #262626">0 U</div><div class="tt" style="left:1565.90px;top:7px;font-size:27px;letter-spacing:0.241px;color:#262626;-webkit-text-stroke:0.35px #262626">5 U</div><div class="tt" style="left:1816.00px;top:7px;font-size:27px;letter-spacing:0.091px;color:#262626;-webkit-text-stroke:0.35px #262626">0 U</div></div>
<div class="row" style="top:674px"><div class="tt" style="left:7.50px;top:7px;font-size:27px;letter-spacing:-0.135px;color:#262626;-webkit-text-stroke:0.35px #262626">PL-R-pBR322 - pBR322 Plasmid DNA</div><div class="tt" style="left:683.00px;top:7px;font-size:27px;transform:scaleX(0.9412);transform-origin:0 0;color:#262626;-webkit-text-stroke:0.35px #262626">THERMO FISHER - THFI</div><div class="tt" style="left:1064.75px;top:7px;font-size:27px;transform:scaleX(0.9769);transform-origin:0 0;color:#262626;-webkit-text-stroke:0.35px #262626">110 µg</div><div class="tt" style="left:1314.70px;top:7px;font-size:27px;letter-spacing:-0.098px;color:#262626;-webkit-text-stroke:0.35px #262626">10 µg</div><div class="tt" style="left:1564.90px;top:7px;font-size:27px;letter-spacing:0.099px;color:#262626;-webkit-text-stroke:0.35px #262626">100 µg</div><div class="tt" style="left:1816.00px;top:7px;font-size:27px;letter-spacing:0.442px;color:#262626;-webkit-text-stroke:0.35px #262626">0 µg</div></div>
<div class="row b" style="top:726px"></div>
<div class="row" style="top:778px"></div>
<div class="row b" style="top:830px"></div>
<div class="row" style="top:882px"></div>
<div class="row b" style="top:934px"></div>
<div style="position:absolute;left:0;top:942px;width:1928px;height:30px;background:#f9f9f9;border-top:2px solid #e3e3e3;border-bottom:2px solid #ececec"></div>
<div style="position:absolute;left:6px;top:950px;width:1504px;height:16px;border-radius:8px;background:#7f7f7f"></div></div>
</div>
</body></html>
